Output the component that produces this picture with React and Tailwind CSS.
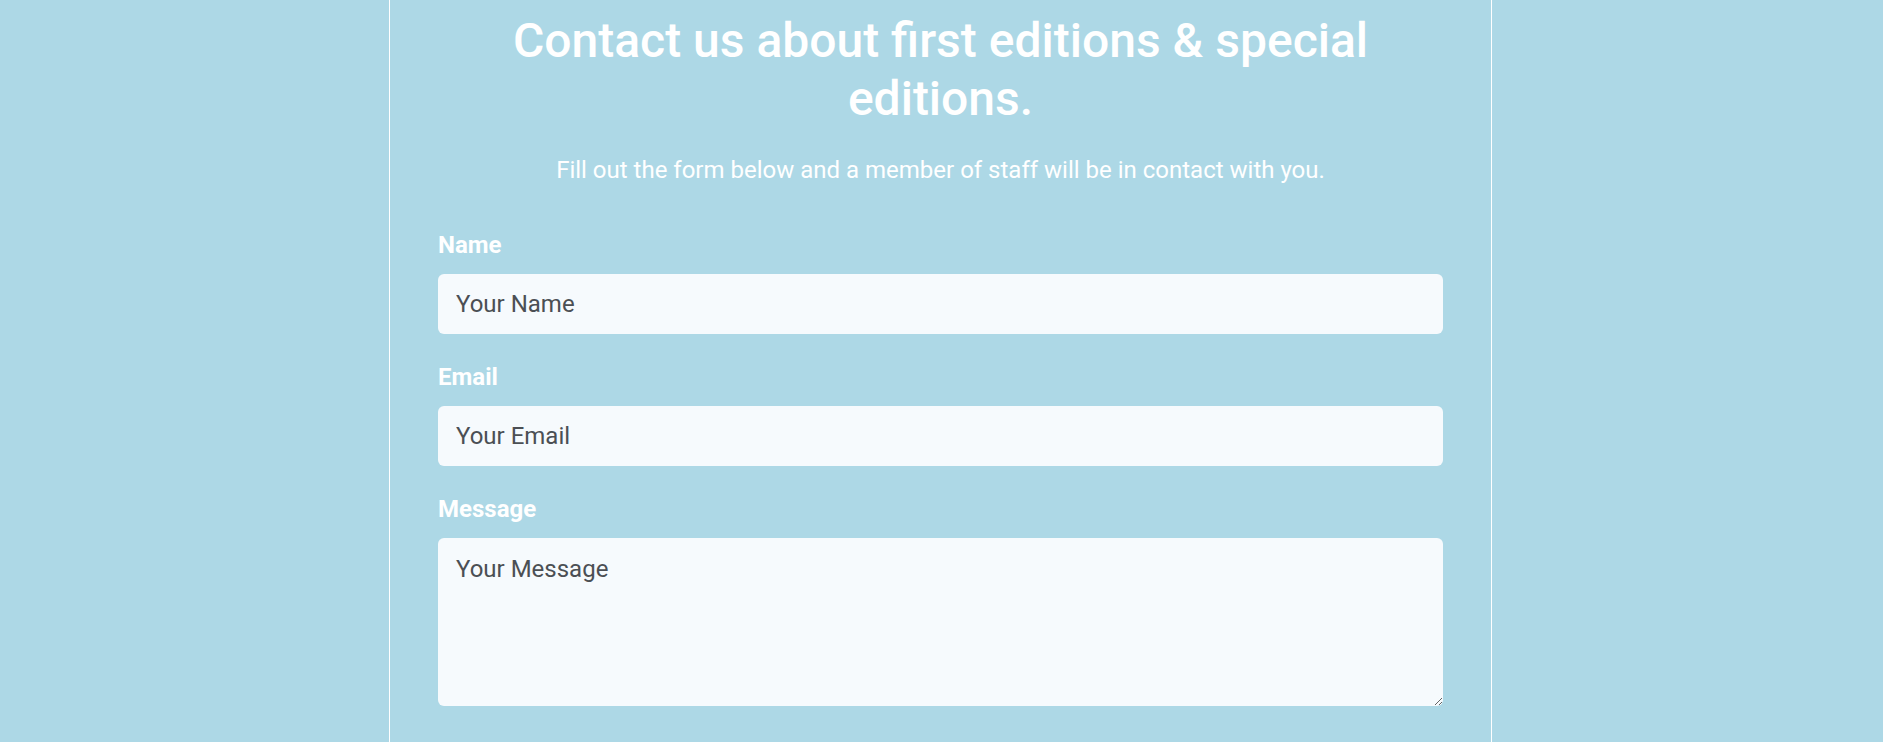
export default function App() {
  const fieldClass =
    "block w-full bg-[#f6fafd] rounded-[6px] px-[18px] text-[24px] text-[#4b4f54] placeholder:text-[#4b4f54] outline-none border-0";
  const labelClass = "block text-[24px] leading-[28px] font-bold text-white mb-[15px]";

  return (
    <div className="min-h-screen bg-[#add8e6] font-['Roboto','Liberation_Sans',sans-serif]">
      <div className="w-[1103px] ml-[389px] min-h-screen border-x border-white px-12">
        <h1 className="pt-[12px] text-[48px] leading-[1.2] font-medium text-white text-center">
          Contact us about first editions &amp; special editions.
        </h1>
        <p className="mt-[25px] text-[24px] leading-[1.5] font-normal text-white text-center">
          Fill out the form below and a member of staff will be in contact with you.
        </p>

        <form className="mt-[43px]" onSubmit={(e) => e.preventDefault()}>
          <label htmlFor="name" className={labelClass}>
            Name
          </label>
          <input id="name" type="text" placeholder="Your Name" className={`${fieldClass} h-[60px]`} />

          <label htmlFor="email" className={`${labelClass} mt-[29px]`}>
            Email
          </label>
          <input id="email" type="email" placeholder="Your Email" className={`${fieldClass} h-[60px]`} />

          <label htmlFor="message" className={`${labelClass} mt-[29px]`}>
            Message
          </label>
          <textarea
            id="message"
            placeholder="Your Message"
            className={`${fieldClass} h-[168px] pt-[13px] pb-[13px]`}
          />
        </form>
      </div>
    </div>
  );
}
